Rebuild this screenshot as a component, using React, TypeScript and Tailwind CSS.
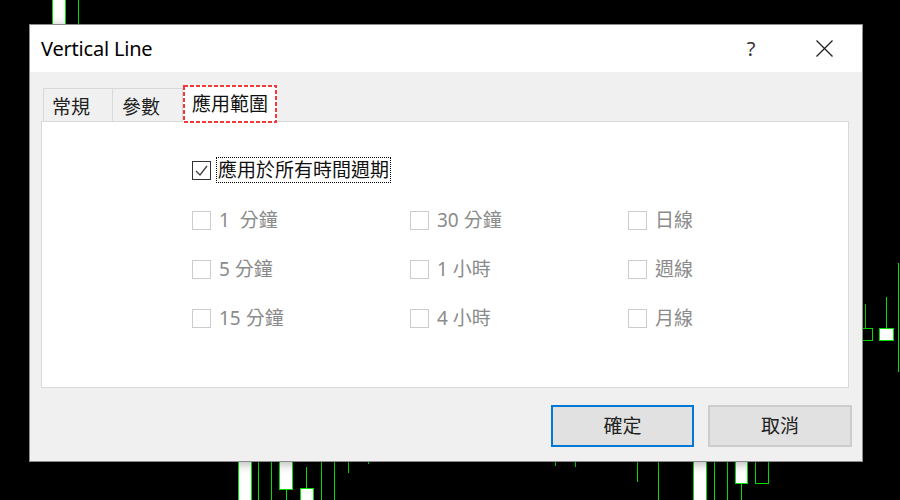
import React from "react";

const FONT = '"Noto Sans", "Noto Sans CJK TC", sans-serif';

type Seg = { x: number; y1: number; y2: number };
type Body = { x1: number; x2: number; y1: number; y2: number; fill: string };

const lines: Seg[] = [
  { x: 78, y1: 0, y2: 24 },
  { x: 258, y1: 462, y2: 500 },
  { x: 271, y1: 462, y2: 500 },
  { x: 286, y1: 488, y2: 500 },
  { x: 306, y1: 467, y2: 489 },
  { x: 321, y1: 462, y2: 500 },
  { x: 334, y1: 462, y2: 500 },
  { x: 348, y1: 462, y2: 473 },
  { x: 368, y1: 462, y2: 464 },
  { x: 555, y1: 462, y2: 466 },
  { x: 575, y1: 462, y2: 467 },
  { x: 637, y1: 462, y2: 482 },
  { x: 658, y1: 462, y2: 500 },
  { x: 714, y1: 462, y2: 500 },
  { x: 727, y1: 462, y2: 500 },
  { x: 741, y1: 482, y2: 500 },
  { x: 865, y1: 304, y2: 341 },
  { x: 886, y1: 297, y2: 339 },
  { x: 898, y1: 263, y2: 372 },
];

const bodies: Body[] = [
  { x1: 52, x2: 65, y1: -2, y2: 26, fill: "#ffffff" },
  { x1: 238, x2: 251, y1: 460, y2: 502, fill: "#ffffff" },
  { x1: 279, x2: 292, y1: 460, y2: 489, fill: "#ffffff" },
  { x1: 300, x2: 313, y1: 488, y2: 502, fill: "#ffffff" },
  { x1: 693, x2: 706, y1: 460, y2: 502, fill: "#ffffff" },
  { x1: 735, x2: 747, y1: 460, y2: 483, fill: "#ffffff" },
  { x1: 755, x2: 768, y1: 460, y2: 483, fill: "#000000" },
  { x1: 858, x2: 872, y1: 328, y2: 340, fill: "#000000" },
  { x1: 879, x2: 893, y1: 328, y2: 340, fill: "#ffffff" },
];

function Chart() {
  return (
    <svg className="absolute inset-0" width={900} height={500}>
      {lines.map((l, i) => (
        <line key={i} x1={l.x + 0.5} x2={l.x + 0.5} y1={l.y1} y2={l.y2} stroke="#00e000" strokeWidth={1} />
      ))}
      {bodies.map((b, i) => (
        <rect
          key={i}
          x={b.x1 + 0.5}
          y={b.y1 + 0.5}
          width={b.x2 - b.x1}
          height={b.y2 - b.y1}
          fill={b.fill}
          stroke="#00e000"
          strokeWidth={1}
        />
      ))}
    </svg>
  );
}

function Box({ checked, disabled }: { checked?: boolean; disabled?: boolean }) {
  return (
    <div
      className={
        "w-[19px] h-[19px] shrink-0 border bg-white flex items-center justify-center " +
        (disabled ? "border-[#cccccc]" : "border-[#333333]")
      }
    >
      {checked && (
        <svg width={17} height={17} viewBox="0 0 17 17">
          <polyline points="3,9 7,13 14,4" fill="none" stroke="#444" strokeWidth={1.4} />
        </svg>
      )}
    </div>
  );
}

function Item({ label }: { label: string }) {
  return (
    <div className="w-[218px] flex items-center">
      <Box disabled />
      <span className="ml-[8px] text-[19px] leading-[24px] text-[#8b8b8b] whitespace-pre">{label}</span>
    </div>
  );
}

export default function App() {
  const rows = [
    ["1  分鐘", "30 分鐘", "日線"],
    ["5 分鐘", "1 小時", "週線"],
    ["15 分鐘", "4 小時", "月線"],
  ];
  return (
    <div className="relative w-[900px] h-[500px] bg-black overflow-hidden" style={{ fontFamily: FONT }}>
      <Chart />
      <div className="absolute left-[29px] top-[24px] w-[834px] h-[438px] border border-[#8c8c8c] flex flex-col shadow-[0_2px_10px_rgba(0,0,0,0.3)]">
        {/* title bar */}
        <div className="h-[47px] bg-white flex items-center shrink-0">
          <span className="ml-[11px] text-[20px] tracking-[-0.2px] text-black">Vertical Line</span>
          <div className="ml-auto mr-[15px] flex items-center gap-[27px]">
            <div className="w-[46px] flex justify-center text-[20px] text-[#333]">?</div>
            <div className="w-[46px] flex justify-center">
              <svg width={17} height={17} viewBox="0 0 17 17">
                <line x1={0.5} y1={0.5} x2={16.5} y2={16.5} stroke="#222" strokeWidth={1.2} />
                <line x1={16.5} y1={0.5} x2={0.5} y2={16.5} stroke="#222" strokeWidth={1.2} />
              </svg>
            </div>
          </div>
        </div>
        {/* body */}
        <div className="flex-1 bg-[#f0f0f0] flex flex-col pl-[11px] pt-[13px]">
          {/* tabs */}
          <div className="h-[36px] flex items-end ml-[2px] relative z-10">
            <div className="w-[70px] h-[33px] border border-b-0 border-[#d9d9d9] pl-[8px] flex items-center text-[19px] text-[#222] pt-[4px]">
              常規
            </div>
            <div className="w-[70px] h-[33px] border-t border-r border-[#d9d9d9] pl-[9px] flex items-center text-[19px] text-[#222] pt-[4px]">
              參數
            </div>
            <div className="relative w-[94px] h-[38px] -mb-[2px] bg-white pl-[9px] flex items-center text-[19px] text-[#111]">
              應用範圍
              <svg className="absolute inset-0" width={94} height={38}>
                <rect x={1} y={1} width={92} height={36} fill="none" stroke="#f23a3a" strokeWidth={2} strokeDasharray="4 2" />
              </svg>
            </div>
          </div>
          {/* panel */}
          <div className="w-[808px] h-[267px] bg-white border border-[#d9d9d9] pl-[150px] pt-[35px]">
            <div className="flex items-center">
              <Box checked />
              <span className="ml-[5px] border border-dotted border-black px-[1px] h-[26px] flex items-center text-[19px] text-[#111]">
                應用於所有時間週期
              </span>
            </div>
            <div className="mt-[25px] flex flex-col">
              {rows.map((r, i) => (
                <div key={i} className="h-[49px] flex items-start">
                  {r.map((l) => (
                    <Item key={l} label={l} />
                  ))}
                </div>
              ))}
            </div>
          </div>
          {/* buttons */}
          <div className="mt-[17px] flex justify-end gap-[14px] pr-[10px]">
            <button className="w-[143px] h-[42px] bg-[#e1e1e1] border-2 border-[#0078d7] text-[19px] text-[#222]">
              確定
            </button>
            <button className="w-[144px] h-[42px] bg-[#e1e1e1] border-2 border-[#cccccc] text-[19px] text-[#222]">
              取消
            </button>
          </div>
        </div>
      </div>
    </div>
  );
}
